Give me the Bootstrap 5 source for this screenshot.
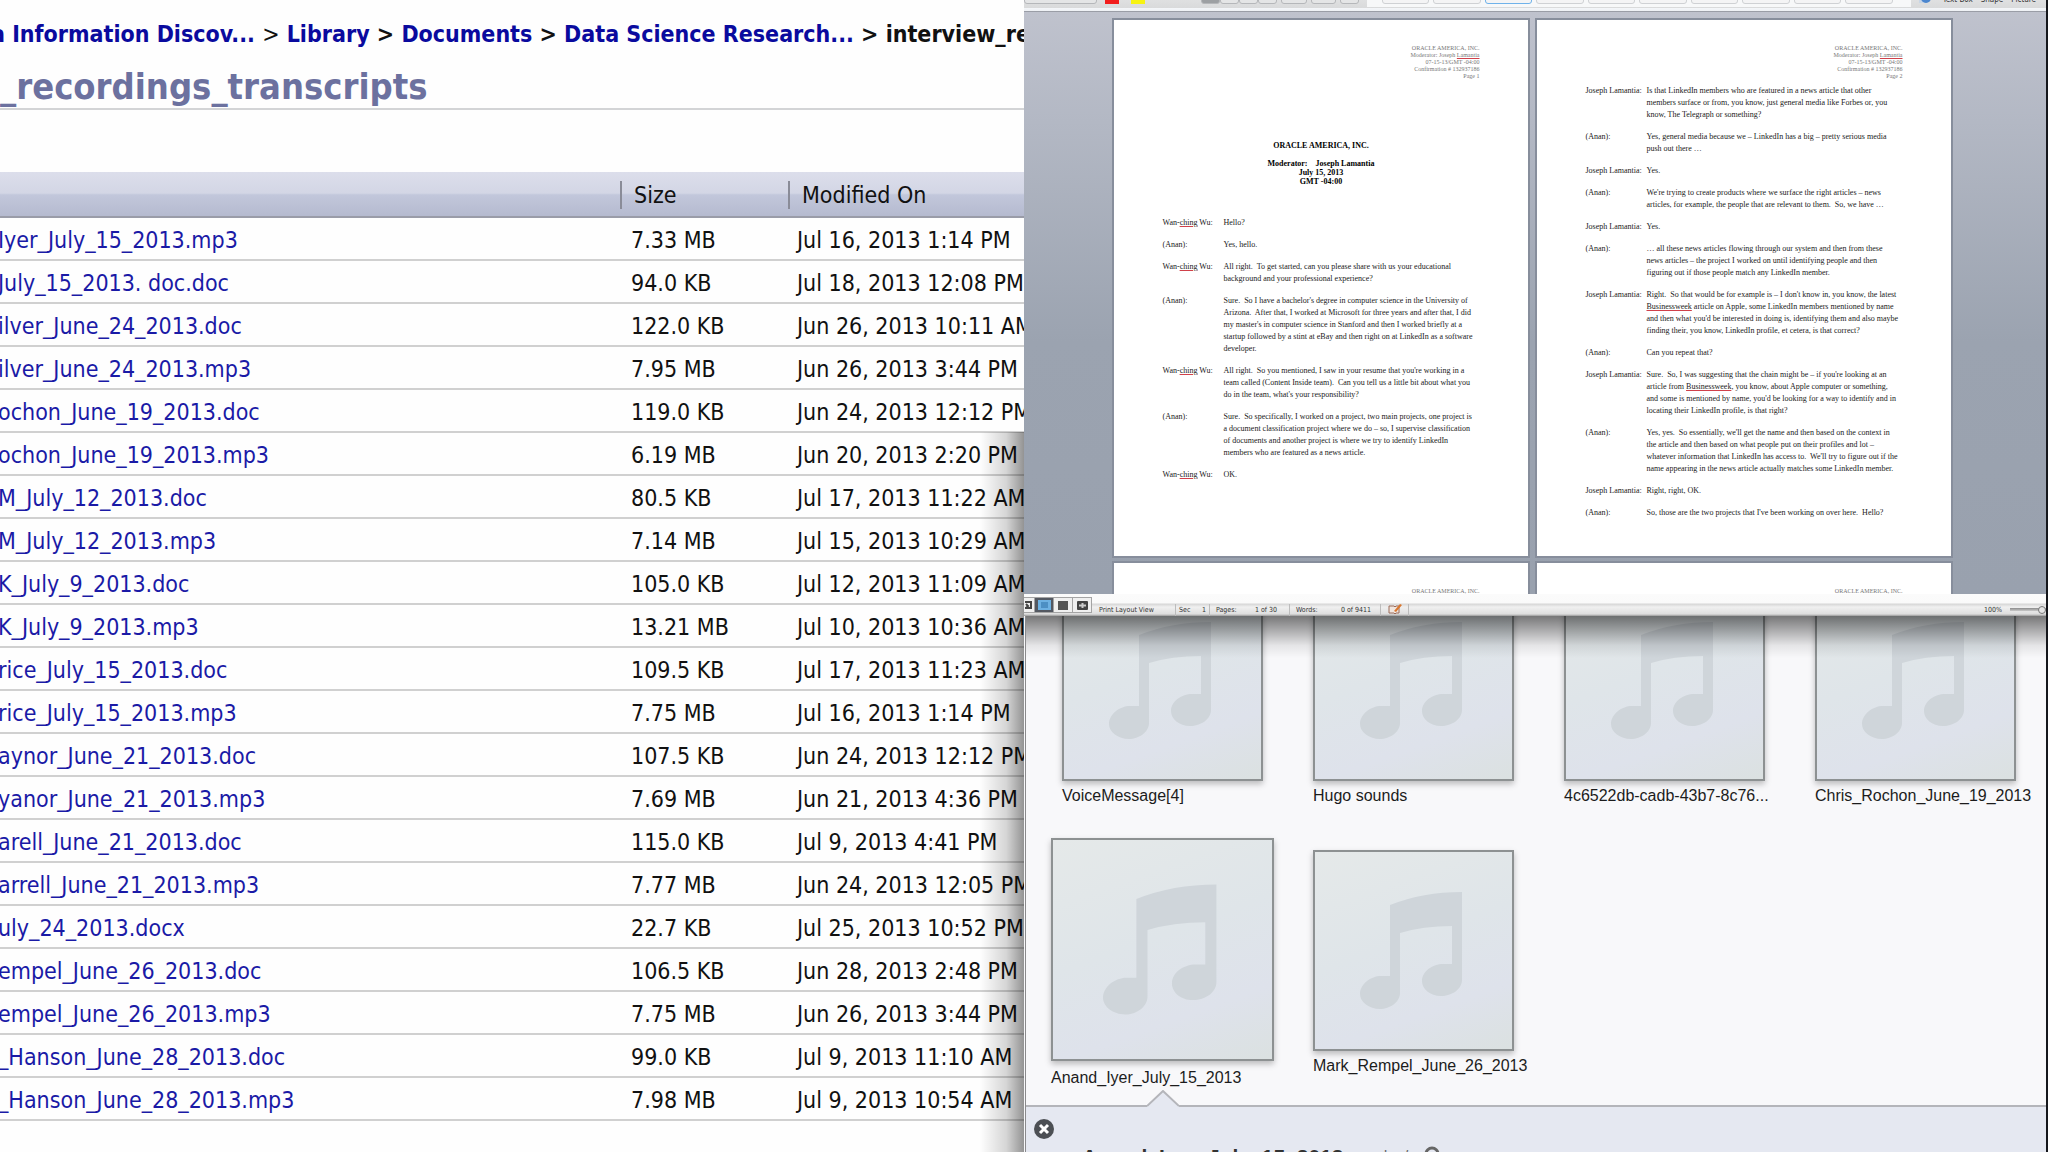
<!DOCTYPE html>
<html lang="en">
<head>
<meta charset="utf-8">
<meta name="viewport" content="width=device-width, initial-scale=1">
<title>Interview recordings and transcripts</title>
<link rel="stylesheet" href="https://cdn.jsdelivr.net/npm/bootstrap@5.3.0/dist/css/bootstrap.min.css">
<script src="https://cdn.jsdelivr.net/npm/bootstrap@5.3.0/dist/js/bootstrap.bundle.min.js"></script>
<style>
  body { background: #fff; color: #111; }
  .desk { height: 100vh; overflow: hidden; }

  /* document library */
  .library { font-family: "DejaVu Sans Condensed", "DejaVu Sans", sans-serif; font-size: 23px; background: #fefefe; }
  .library a { color: #1a1aa6; text-decoration: none; }
  .crumbs { padding-top: 20px; height: 60px; line-height: 28px; font-weight: 700; text-indent: -9px; }
  .crumbs a { color: #0a0a9e; }
  .page-title { margin: 0; height: 50px; line-height: 54px; font-size: 36px; font-weight: 700; color: #6c719f; border-bottom: 2px solid #d3d4d6; }
  .files { margin-top: 62px; table-layout: fixed; width: 100%; border-collapse: separate; border-spacing: 0; line-height: 28px; }
  .files th { height: 46px; padding: 1px 0 0 12px; font-weight: 400; vertical-align: middle; background: linear-gradient(#dcdeeb 0, #d3d6e5 48%, #c2c7db 52%, #b5bacf 100%); border-bottom: 2px solid #9a9ca8; }
  .files th span { display: block; margin-left: -12px; padding-left: 12px; border-left: 2px solid #8a8c98; }
  .files td { height: 43px; padding: 2px 0 0 11px; vertical-align: middle; border-bottom: 2px solid #d0d0d0; overflow: hidden; }
  .files td:last-child { padding-left: 9px; }
  .files td:first-child, .files th:first-child { padding-left: 0; }
  .files td:first-child { text-indent: -2px; }
  .c-size { width: 168px; }
  .c-date { width: 236px; }
  .edge-shade { top: 432px; bottom: 0; right: 0; width: 44px; background: linear-gradient(to left, rgba(0,0,0,.42), rgba(0,0,0,.16) 40%, rgba(0,0,0,0)); }

  .right-side { border-right: 2px solid #15171c; background: #f8f8fa; }

  /* word processor */
  .word { position: relative; z-index: 2; font-family: "DejaVu Sans Condensed", "DejaVu Sans", sans-serif; color: #333; }
  .ribbon { height: 12px; padding: 0 6px 8px 0; background: linear-gradient(#dfe0e1 0, #d9dadb 8px, #f4f6f9 8px, #eef1f5 11px, #9a9da6 11px); font-size: 8px; line-height: 9px; }
  .ribbon button { border: 1px solid #b5b7ba; background: #e4e5e6; border-radius: 3px; height: 16px; padding: 0 2px; font-size: 8px; line-height: 14px; color: #333; overflow: hidden; white-space: nowrap; }
  .swatch { width: 14px; height: 6px; }
  .gallery { background: #f7f8f9; width: 544px; padding: 0 18px 3px 15px; gap: 4px; margin-bottom: -3px; height: 20px; }
  .ribbon .gallery button { flex: 1 1 0; background: #f4f4f5; border-color: #cfd1d4; }
  .ribbon .gallery button.picked { border-color: #6fb2ea; }
  .canvas { height: 582px; padding-top: 8px; background: linear-gradient(#bfc2cd 0, #b3b8c4 110px, #9ba3b0 330px, #99a1ae 100%); }
  .sheets { display: grid; grid-template-columns: 414px 414px; column-gap: 9px; row-gap: 7px; justify-content: center; padding-right: 6px; }
  .sheet { height: 536px; background: #fff; box-shadow: 0 0 0 2px #878e9c; padding: 25px 48px 0 49px; font-family: "Liberation Serif", serif; font-size: 8px; line-height: 12px; color: #1a1a1a; }
  .sheet-head { font-size: 6px; line-height: 7px; text-align: right; color: #777; margin-bottom: 5px; }
  .sheet-title { margin: 61px 0 31px; text-align: center; font-weight: 700; line-height: 9px; color: #000; }
  .talk { display: grid; grid-template-columns: 61px 1fr; row-gap: 10px; margin: 0; white-space: nowrap; }
  .talk dt, .talk dd { font-weight: 400; margin: 0; }
  .typo { text-decoration: underline #d0414a; text-decoration-thickness: 1px; }
  .statusbar { height: 22px; background: linear-gradient(#fbfbfb 0, #fafafa 9px, #d6d6d6 10px, #f0f0f0 13px, #dedede 20px, #9a9a9a 22px); font-size: 7px; line-height: 12px; }
  .views { padding-bottom: 3px; height: 20px; }
  .views button { width: 19px; height: 16px; padding: 0; border: 1px solid #a4a4a4; border-left-width: 0; background: #f0f0f0; line-height: 0; }
  .views button:first-child { width: 11px; }
  .views button.on { background: #535861; }
  .cell { height: 12px; padding: 0 3px; border-right: 1px solid #bcbcbc; white-space: nowrap; }
  .zoomer { width: 36px; height: 10px; margin: 0 0 1px; appearance: none; background: linear-gradient(transparent 3px, #8c8c8c 3px, #c9c9c9 6px, transparent 6px); }
  .zoomer::-webkit-slider-thumb { appearance: none; width: 8px; height: 8px; border-radius: 50%; background: #e4e4e4; border: 1px solid #777; }

  /* sound browser */
  .sounds { position: relative; font-family: "Liberation Sans", Arial, sans-serif; font-size: 16px; line-height: 20px; color: #1c1c1c; overflow: hidden; margin-left: 1px; border-left: 1px solid #8a8a8c; background: #f8f8fa; }
  .sounds::before { content: ""; position: absolute; z-index: 1; inset: 0 0 auto 0; height: 42px; background: linear-gradient(rgba(0,0,0,.52), rgba(0,0,0,.3) 35%, rgba(0,0,0,.08) 70%, rgba(0,0,0,0)); pointer-events: none; }
  .tile-row { display: grid; grid-template-columns: repeat(4, 201px); column-gap: 50px; padding-left: 36px; white-space: nowrap; }
  .tile-row.first { height: 190px; align-content: end; }
  .tile-row.second { padding-top: 32px; align-items: center; }
  .tile figcaption { padding-top: 5px; }
  .tile svg { display: block; width: 201px; height: 201px; border: 2px solid #8d9192; background: linear-gradient(160deg, #e5e9e9 0, #dfe5e9 45%, #dee2eb 75%, #dbe1e1 100%); box-shadow: 0 3px 6px rgba(0,0,0,.25); }
  .tile.chosen { margin: 0 -11px; }
  .tile.chosen svg { width: 223px; height: 223px; }
  .tile.chosen figcaption { padding-top: 7px; }
  .detail { position: relative; height: 47px; padding: 12px 0 0 8px; background: #e5e8f1; border-top: 2px solid #b4b5ba; }
  .notch { position: absolute; left: 121px; top: -17px; }
  .detail button { border: 0; padding: 0; background: none; line-height: 0; }
  .detail h2 { font-size: 21px; line-height: 24px; font-weight: 700; margin: 26px 0 0 28px; color: #333; }
  .detail .tail { margin: 26px 0 0 40px; color: #666; line-height: 24px; }
  .detail .share { margin-top: 27px; }
</style>
</head>
<body>
<svg width="0" height="0" class="d-none" aria-hidden="true">
  <defs>
    <symbol id="note" viewBox="0 0 197 197">
      <path fill="#cfd5da" d="M75 53 Q108 40 147 40 V128 C147 137 137 144 126 144 C115 144 107 137 107 129 C107 119 118 112 128 112 H137 V74 Q108 74 85 81 V141 C85 150 75 157 65 157 C54 157 45 150 45 142 C45 132 56 124 66 124 H75 Z"/>
    </symbol>
  </defs>
</svg>
<div class="desk row g-0">
  <section class="library col-6 h-100 position-relative overflow-hidden">
    <nav class="crumbs text-nowrap overflow-hidden" aria-label="breadcrumb"><a href="#">a Information Discov...</a> <span class="fw-normal">&gt;</span> <a href="#">Library</a> &gt; <a href="#">Documents</a> &gt; <a href="#">Data Science Research...</a> &gt; interview_re</nav>
    <h1 class="page-title">_recordings_transcripts</h1>
    <table class="files text-nowrap">
      <colgroup><col><col class="c-size"><col class="c-date"></colgroup>
      <thead><tr><th></th><th><span>Size</span></th><th><span>Modified On</span></th></tr></thead>
      <tbody>
        <tr><td><a href="#">Iyer_July_15_2013.mp3</a></td><td>7.33 MB</td><td>Jul 16, 2013 1:14 PM</td></tr>
        <tr><td><a href="#">July_15_2013. doc.doc</a></td><td>94.0 KB</td><td>Jul 18, 2013 12:08 PM</td></tr>
        <tr><td><a href="#">ilver_June_24_2013.doc</a></td><td>122.0 KB</td><td>Jun 26, 2013 10:11 AM</td></tr>
        <tr><td><a href="#">ilver_June_24_2013.mp3</a></td><td>7.95 MB</td><td>Jun 26, 2013 3:44 PM</td></tr>
        <tr><td><a href="#">ochon_June_19_2013.doc</a></td><td>119.0 KB</td><td>Jun 24, 2013 12:12 PM</td></tr>
        <tr><td><a href="#">ochon_June_19_2013.mp3</a></td><td>6.19 MB</td><td>Jun 20, 2013 2:20 PM</td></tr>
        <tr><td><a href="#">M_July_12_2013.doc</a></td><td>80.5 KB</td><td>Jul 17, 2013 11:22 AM</td></tr>
        <tr><td><a href="#">M_July_12_2013.mp3</a></td><td>7.14 MB</td><td>Jul 15, 2013 10:29 AM</td></tr>
        <tr><td><a href="#">K_July_9_2013.doc</a></td><td>105.0 KB</td><td>Jul 12, 2013 11:09 AM</td></tr>
        <tr><td><a href="#">K_July_9_2013.mp3</a></td><td>13.21 MB</td><td>Jul 10, 2013 10:36 AM</td></tr>
        <tr><td><a href="#">rice_July_15_2013.doc</a></td><td>109.5 KB</td><td>Jul 17, 2013 11:23 AM</td></tr>
        <tr><td><a href="#">rice_July_15_2013.mp3</a></td><td>7.75 MB</td><td>Jul 16, 2013 1:14 PM</td></tr>
        <tr><td><a href="#">aynor_June_21_2013.doc</a></td><td>107.5 KB</td><td>Jun 24, 2013 12:12 PM</td></tr>
        <tr><td><a href="#">yanor_June_21_2013.mp3</a></td><td>7.69 MB</td><td>Jun 21, 2013 4:36 PM</td></tr>
        <tr><td><a href="#">arell_June_21_2013.doc</a></td><td>115.0 KB</td><td>Jul 9, 2013 4:41 PM</td></tr>
        <tr><td><a href="#">arrell_June_21_2013.mp3</a></td><td>7.77 MB</td><td>Jun 24, 2013 12:05 PM</td></tr>
        <tr><td><a href="#">uly_24_2013.docx</a></td><td>22.7 KB</td><td>Jul 25, 2013 10:52 PM</td></tr>
        <tr><td><a href="#">empel_June_26_2013.doc</a></td><td>106.5 KB</td><td>Jun 28, 2013 2:48 PM</td></tr>
        <tr><td><a href="#">empel_June_26_2013.mp3</a></td><td>7.75 MB</td><td>Jun 26, 2013 3:44 PM</td></tr>
        <tr><td><a href="#">_Hanson_June_28_2013.doc</a></td><td>99.0 KB</td><td>Jul 9, 2013 11:10 AM</td></tr>
        <tr><td><a href="#">_Hanson_June_28_2013.mp3</a></td><td>7.98 MB</td><td>Jul 9, 2013 10:54 AM</td></tr>
      </tbody>
    </table>
    <div class="edge-shade position-absolute"></div>
  </section>

  <div class="right-side col-6 h-100 d-flex flex-column">
    <section class="word flex-shrink-0">
      <div class="ribbon d-flex align-items-end overflow-hidden">
        <button type="button" class="me-2" style="width:73px" aria-label="Font"></button>
        <span class="swatch me-2" style="background:#f21d1d"></span>
        <span class="swatch ms-1 me-2" style="background:#f7f312"></span>
        <span class="flex-grow-1"></span>
        <span class="d-flex me-1"><button type="button" style="width:19px;background:#9da0a3" aria-label="Align left"></button><button type="button" style="width:19px" aria-label="Center"></button><button type="button" style="width:19px" aria-label="Align right"></button><button type="button" style="width:19px" aria-label="Justify"></button></span>
        <button type="button" class="me-1" style="width:26px" aria-label="Spacing"></button>
        <button type="button" class="me-1" style="width:25px" aria-label="Columns"></button>
        <button type="button" class="me-2" style="width:19px" aria-label="Theme"><svg width="12" height="6" viewBox="0 0 12 6"><path d="M0 6 L3 0 H5 L8 6Z" fill="#3b78b5"/><path d="M9 2h3l-2 3z" fill="#555"/></svg></button>
        <span class="gallery d-flex align-items-end flex-shrink-0">
          <button type="button">Emphasis</button><button type="button">Heading 1</button><button type="button" class="picked">Normal</button><button type="button">Strong</button><button type="button">Subtitle</button><button type="button">Title</button><button type="button">No Spacing</button><button type="button">Subtle Emph...</button><button type="button">Intense Emp...</button><button type="button">Quote</button>
        </span>
        <svg class="ms-2 me-2" width="12" height="12" viewBox="0 0 12 12"><rect x="0" y="3" width="6" height="8" fill="#c8d6e6"/><circle cx="7" cy="6" r="5" fill="#4b86cf"/></svg>
        <span class="ms-1 me-2 text-nowrap">Text Box</span><span class="me-2">Shape</span><span class="me-1">Picture</span>
      </div>
      <div class="canvas overflow-hidden">
        <div class="sheets">
          <article class="sheet">
            <div class="sheet-head">ORACLE AMERICA, INC.<br>Moderator: Joseph <span class="typo">Lamantia</span><br>07-15-13/GMT -04:00<br>Confirmation # 132937186<br>Page 1</div>
            <div class="sheet-title">ORACLE AMERICA, INC.<br><br>Moderator:&nbsp;&nbsp;&nbsp; Joseph Lamantia<br>July 15, 2013<br>GMT -04:00</div>
            <dl class="talk">
              <dt>Wan-<span class="typo">ching</span> Wu:</dt><dd>Hello?</dd>
              <dt>(Anan):</dt><dd>Yes, hello.</dd>
              <dt>Wan-<span class="typo">ching</span> Wu:</dt><dd>All right.&nbsp; To get started, can you please share with us your educational<br>background and your professional experience?</dd>
              <dt>(Anan):</dt><dd>Sure.&nbsp; So I have a bachelor's degree in computer science in the University of<br>Arizona.&nbsp; After that, I worked at Microsoft for three years and after that, I did<br>my master's in computer science in Stanford and then I worked briefly at a<br>startup followed by a stint at eBay and then right on at LinkedIn as a software<br>developer.</dd>
              <dt>Wan-<span class="typo">ching</span> Wu:</dt><dd>All right.&nbsp; So you mentioned, I saw in your resume that you're working in a<br>team called (Content Inside team).&nbsp; Can you tell us a little bit about what you<br>do in the team, what's your responsibility?</dd>
              <dt>(Anan):</dt><dd>Sure.&nbsp; So specifically, I worked on a project, two main projects, one project is<br>a document classification project where we do – so, I supervise classification<br>of documents and another project is where we try to identify LinkedIn<br>members who are featured as a news article.</dd>
              <dt>Wan-<span class="typo">ching</span> Wu:</dt><dd>OK.</dd>
            </dl>
          </article>
          <article class="sheet">
            <div class="sheet-head">ORACLE AMERICA, INC.<br>Moderator: Joseph <span class="typo">Lamantia</span><br>07-15-13/GMT -04:00<br>Confirmation # 132937186<br>Page 2</div>
            <dl class="talk">
              <dt>Joseph Lamantia:</dt><dd>Is that LinkedIn members who are featured in a news article that other<br>members surface or from, you know, just general media like Forbes or, you<br>know, The Telegraph or something?</dd>
              <dt>(Anan):</dt><dd>Yes, general media because we – LinkedIn has a big – pretty serious media<br>push out there …</dd>
              <dt>Joseph Lamantia:</dt><dd>Yes.</dd>
              <dt>(Anan):</dt><dd>We're trying to create products where we surface the right articles – news<br>articles, for example, the people that are relevant to them.&nbsp; So, we have …</dd>
              <dt>Joseph Lamantia:</dt><dd>Yes.</dd>
              <dt>(Anan):</dt><dd>… all these news articles flowing through our system and then from these<br>news articles – the project I worked on until identifying people and then<br>figuring out if those people match any LinkedIn member.</dd>
              <dt>Joseph Lamantia:</dt><dd>Right.&nbsp; So that would be for example is – I don't know in, you know, the latest<br><span class="typo">Businessweek</span> article on Apple, some LinkedIn members mentioned by name<br>and then what you'd be interested in doing is, identifying them and also maybe<br>finding their, you know, LinkedIn profile, et cetera, is that correct?</dd>
              <dt>(Anan):</dt><dd>Can you repeat that?</dd>
              <dt>Joseph Lamantia:</dt><dd>Sure.&nbsp; So, I was suggesting that the chain might be – if you're looking at an<br>article from <span class="typo">Businessweek</span>, you know, about Apple computer or something,<br>and some is mentioned by name, you'd be looking for a way to identify and in<br>locating their LinkedIn profile, is that right?</dd>
              <dt>(Anan):</dt><dd>Yes, yes.&nbsp; So essentially, we'll get the name and then based on the context in<br>the article and then based on what people put on their profiles and lot –<br>whatever information that LinkedIn has access to.&nbsp; We'll try to figure out if the<br>name appearing in the news article actually matches some LinkedIn member.</dd>
              <dt>Joseph Lamantia:</dt><dd>Right, right, OK.</dd>
              <dt>(Anan):</dt><dd>So, those are the two projects that I've been working on over here.&nbsp; Hello?</dd>
            </dl>
          </article>
          <article class="sheet"><div class="sheet-head">ORACLE AMERICA, INC.</div></article>
          <article class="sheet"><div class="sheet-head">ORACLE AMERICA, INC.</div></article>
        </div>
      </div>
      <div class="statusbar d-flex align-items-end">
        <div class="views d-flex align-items-end me-1">
          <button type="button" aria-label="Draft view"><svg width="8" height="8" viewBox="0 0 8 8"><path d="M0 1h6v6H0M1 3l2 2-2 2" fill="none" stroke="#444" stroke-width="2"/></svg></button><button type="button" class="on" aria-label="Print layout view"><svg width="13" height="10" viewBox="0 0 13 10"><rect width="13" height="10" fill="#6db1e2"/><path d="M3 3h7M3 5h7M3 7h7" stroke="#2d6ea5"/></svg></button><button type="button" aria-label="Notebook view"><svg width="10" height="9" viewBox="0 0 10 9"><rect width="10" height="9" fill="#555"/></svg></button><button type="button" aria-label="Full screen view"><svg width="11" height="9" viewBox="0 0 11 9"><rect width="11" height="9" rx="1" fill="#444"/><path d="M2 4.500h7M5.500 2v5" stroke="#ccc" stroke-width="2"/></svg></button>
        </div>
        <span class="cell" style="width:80px">Print Layout View</span>
        <span class="cell d-flex justify-content-between" style="width:34px"><span>Sec</span><span>1</span></span>
        <span class="cell d-flex justify-content-between" style="width:80px;padding:0 12px 0 6px"><span>Pages:</span><span>1 of 30</span></span>
        <span class="cell d-flex justify-content-between" style="width:91px;padding:0 9px 0 6px"><span>Words:</span><span>0 of 9411</span></span>
        <span class="cell" style="width:28px;padding-left:7px"><svg width="14" height="11" viewBox="0 0 14 11" class="d-block"><path d="M1 2h5l1 1 1-1h3v7H8l-1 1-1-1H1z" fill="#f1e6df" stroke="#9a6a58"/><path d="M6 7l6-7 2 1-6 7z" fill="#d9772f"/></svg></span>
        <label class="ms-auto me-2" for="zoom">100%</label>
        <input id="zoom" class="zoomer" type="range" min="0" max="100" value="100">
      </div>
    </section>

    <section class="sounds flex-grow-1 d-flex flex-column">
      <div class="tile-row first">
        <figure class="tile m-0"><svg><use href="#note"/></svg><figcaption>VoiceMessage[4]</figcaption></figure>
        <figure class="tile m-0"><svg><use href="#note"/></svg><figcaption>Hugo sounds</figcaption></figure>
        <figure class="tile m-0"><svg><use href="#note"/></svg><figcaption>4c6522db-cadb-43b7-8c76...</figcaption></figure>
        <figure class="tile m-0"><svg><use href="#note"/></svg><figcaption>Chris_Rochon_June_19_2013</figcaption></figure>
      </div>
      <div class="tile-row second">
        <figure class="tile chosen mb-0 mt-0"><svg><use href="#note"/></svg><figcaption>Anand_Iyer_July_15_2013</figcaption></figure>
        <figure class="tile m-0"><svg><use href="#note"/></svg><figcaption>Mark_Rempel_June_26_2013</figcaption></figure>
      </div>
      <div class="detail d-flex align-items-start mt-auto flex-shrink-0">
        <svg class="notch" width="32" height="18" viewBox="0 0 32 18"><path d="M0 18 V16 L16 1 L32 16 V18Z" fill="#e5e8f1"/><path d="M0 16 L16 1 L32 16" fill="none" stroke="#b4b5ba" stroke-width="2"/></svg>
        <button type="button" aria-label="Close"><svg width="20" height="20" viewBox="0 0 20 20"><circle cx="10" cy="10" r="10" fill="#4c4f54"/><path d="M6 6l8 8M14 6l-8 8" stroke="#fff" stroke-width="3"/></svg></button>
        <h2>Anand_Iyer_July_15_2013</h2>
        <span class="tail d-flex gap-3"><span>|</span><span>/</span></span>
        <svg class="share ms-3" width="16" height="16" viewBox="0 0 16 16"><circle cx="8" cy="8" r="6" fill="none" stroke="#666" stroke-width="3"/></svg>
      </div>
    </section>
  </div>
</div>
</body>
</html>
